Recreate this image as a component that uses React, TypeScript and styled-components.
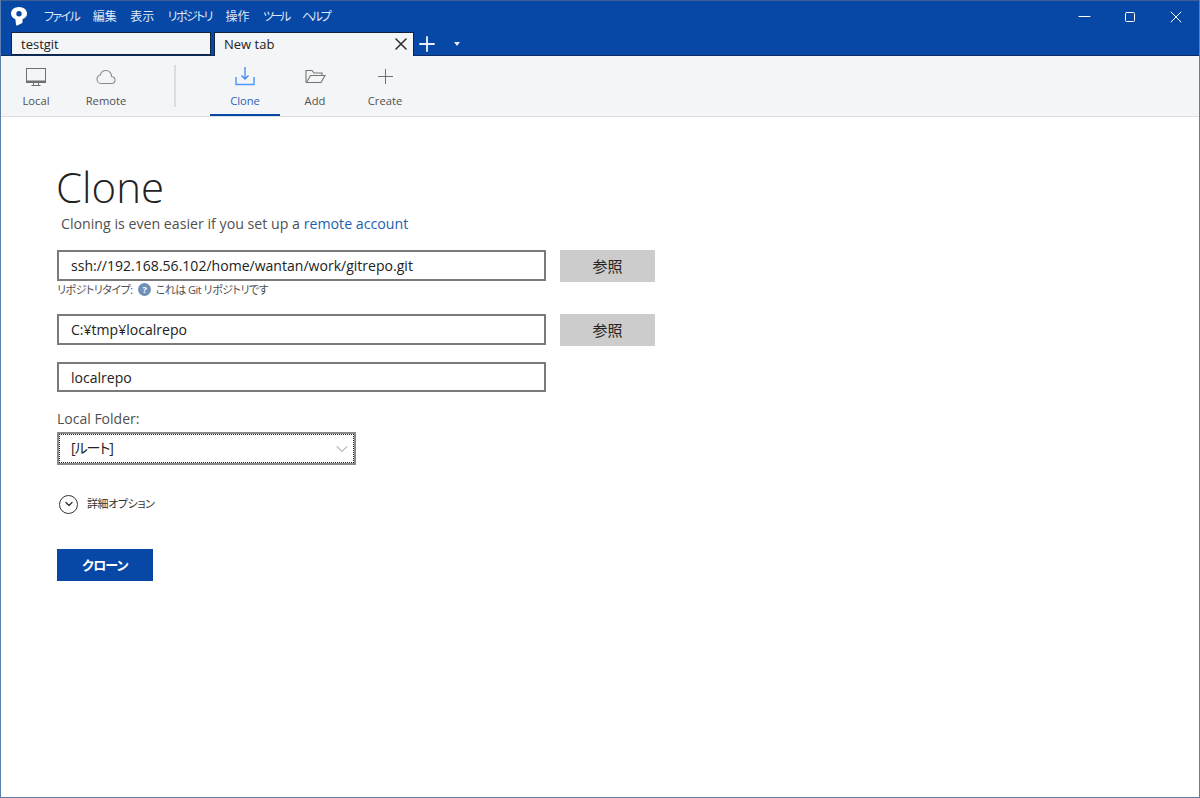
import styled, { createGlobalStyle } from "styled-components";
import { ChevronDown, Minus, Plus, Square, X } from "lucide-react";

const font = `"Open Sans", "Noto Sans CJK JP", sans-serif`;

const GlobalStyle = createGlobalStyle`
  html, body { margin: 0; padding: 0; background: #fff; }
  * { box-sizing: border-box; }
`;

const menus = [
  { label: "ファイル", tracking: -1.6 },
  { label: "編集", tracking: 0 },
  { label: "表示", tracking: 0 },
  { label: "リポジトリ", tracking: -1.6 },
  { label: "操作", tracking: 0 },
  { label: "ツール", tracking: -2.9 },
  { label: "ヘルプ", tracking: -2.3 },
];

const Logo = () => (
  <svg width="16" height="19" viewBox="0 0 16 19">
    <path
      fill="#fff"
      fillRule="evenodd"
      d="M8 0C3.500 0 0 2.800 0 6.500c0 2.800 1.800 4.800 4.400 5.700L5 17.800c.1.700.5 1 1.200.7l4.600-2.200c.5-.3.700-.6.700-1.100v-3C14.300 11.200 16 9.200 16 6.500 16 2.800 12.500 0 8 0zM8 4a2.700 2.700 0 1 1 0 5.400A2.700 2.700 0 0 1 8 4z"
    />
  </svg>
);

const MonitorIcon = () => (
  <svg width="22" height="20" viewBox="0 0 22 20" fill="none" stroke="#6f6f6f">
    <rect x="1.500" y="1.500" width="19" height="14" strokeWidth="1" />
    <path d="M1 14.500h20" strokeWidth="2" />
    <path d="M8.500 16v2M13.500 16v2M6.500 18.500h9" strokeWidth="1" />
  </svg>
);

const CloudIcon = () => (
  <svg width="20" height="16" viewBox="0 0 20 16" fill="none" stroke="#8a8a8a" strokeWidth="1.100">
    <path d="M5 14.500h10.500c2 0 3.500-1.400 3.500-3.400 0-1.900-1.400-3.300-3.300-3.400C15.300 4 13 1.500 9.800 1.500 7 1.500 5 3.400 4.300 6 2.400 6.500 1 8 1 10.200c0 2.400 1.700 4.300 4 4.300z" />
  </svg>
);

const CloneIcon = () => (
  <svg width="20" height="19" viewBox="0 0 20 19" fill="none" stroke="#4c9aff" strokeWidth="1.200">
    <path d="M1 10v7.500h18V10" strokeWidth="1.500" />
    <path d="M10 0v11.500M6.500 8.500l3.500 3.500 3.500-3.500" stroke="#3d8bf0" strokeWidth="1.300" />
  </svg>
);

const FolderIcon = () => (
  <svg width="21" height="15" viewBox="0 0 21 15" fill="none" stroke="#757575" strokeWidth="1.100">
    <path d="M1 13.500V1.500h6l2 2.500h8v2.500" />
    <path d="M1 13.500h15l4-7H5.500L1.500 13.500z" />
  </svg>
);

const PlusIcon = () => (
  <svg width="15" height="15" viewBox="0 0 15 15" stroke="#707070" strokeWidth="1">
    <path d="M7.500 0v15M0 7.500h15" />
  </svg>
);

const HelpBadge = () => (
  <svg width="13" height="13" viewBox="0 0 14 14">
    <circle cx="7" cy="7" r="7" fill="#6f8fb8" />
    <text x="7" y="10.500" fontSize="10" fontWeight="700" fontFamily="Open Sans" fill="#fff" textAnchor="middle">
      ?
    </text>
  </svg>
);

export default function App() {
  return (
    <Window>
      <GlobalStyle />
      <TitleBar>
        <TitleRow>
          <LogoSlot>
            <Logo />
          </LogoSlot>
          <Menu>
            {menus.map((m) => (
              <MenuItem key={m.label} $tracking={m.tracking}>
                {m.label}
              </MenuItem>
            ))}
          </Menu>
          <WindowButtons>
            <WindowButton>
              <Minus size={19} strokeWidth={1.3} />
            </WindowButton>
            <WindowButton>
              <Square size={12} strokeWidth={2} />
            </WindowButton>
            <WindowButton>
              <X size={20} strokeWidth={1.2} />
            </WindowButton>
          </WindowButtons>
        </TitleRow>
        <TabRow>
          <Tab>testgit</Tab>
          <Tab $active>
            New tab
            <TabClose>
              <X size={20} strokeWidth={1.9} />
            </TabClose>
          </Tab>
          <AddTab>
            <Plus size={24} strokeWidth={1.900} />
          </AddTab>
          <TabMenu />
        </TabRow>
      </TitleBar>
      <Toolbar>
        <ToolItem>
          <ToolIcon>
            <MonitorIcon />
          </ToolIcon>
          Local
        </ToolItem>
        <ToolItem>
          <ToolIcon>
            <CloudIcon />
          </ToolIcon>
          Remote
        </ToolItem>
        <ToolDivider />
        <ToolItem $active>
          <ToolIcon>
            <CloneIcon />
          </ToolIcon>
          Clone
        </ToolItem>
        <ToolItem>
          <ToolIcon>
            <FolderIcon />
          </ToolIcon>
          Add
        </ToolItem>
        <ToolItem>
          <ToolIcon>
            <PlusIcon />
          </ToolIcon>
          Create
        </ToolItem>
      </Toolbar>
      <Content>
        <Heading>Clone</Heading>
        <Subtitle>
          Cloning is even easier if you set up a <AccountLink>remote account</AccountLink>
        </Subtitle>
        <FieldRow>
          <TextField>ssh://192.168.56.102/home/wantan/work/gitrepo.git</TextField>
          <BrowseButton>参照</BrowseButton>
        </FieldRow>
        <RepoHint>
          リポジトリタイプ:
          <HelpBadge />
          これは Git リポジトリです
        </RepoHint>
        <FieldRow>
          <TextField>C:¥tmp¥localrepo</TextField>
          <BrowseButton>参照</BrowseButton>
        </FieldRow>
        <NameField>localrepo</NameField>
        <FolderLabel>Local Folder:</FolderLabel>
        <FolderSelect>
          <FolderValue>[ルート]</FolderValue>
          <ChevronDown size={20} strokeWidth={1} color="#777" />
        </FolderSelect>
        <Advanced>
          <AdvancedIcon>
            <ChevronDown size={12} strokeWidth={2.600} color="#333" />
          </AdvancedIcon>
          詳細オプション
        </Advanced>
        <CloneButton>クローン</CloneButton>
      </Content>
    </Window>
  );
}

const Window = styled.div`
  width: 1200px;
  height: 798px;
  overflow: hidden;
  display: flex;
  flex-direction: column;
  border: 1px solid #5a7fb0;
  border-top: 0;
  background: #fff;
  font-family: ${font};
`;

const TitleBar = styled.div`
  height: 56px;
  margin: 0 -1px;
  flex: none;
  background: #0747a6;
  border-top: 1px solid #3f5f8f;
  display: flex;
  flex-direction: column;
`;

const TitleRow = styled.div`
  height: 31px;
  display: flex;
  align-items: center;
`;

const LogoSlot = styled.div`
  width: 44px;
  padding-left: 11px;
  display: flex;
  align-items: center;
`;

const Menu = styled.div`
  display: flex;
  gap: 13.500px;
  font-feature-settings: "palt";
`;

const MenuItem = styled.span<{ $tracking: number }>`
  color: #dfe8f5;
  font-size: 12px;
  line-height: 16px;
  letter-spacing: ${({ $tracking }) => $tracking}px;
`;

const WindowButtons = styled.div`
  margin-left: auto;
  display: flex;
  padding-right: 1px;
`;

const WindowButton = styled.div`
  width: 46px;
  height: 30px;
  color: #fff;
  display: flex;
  align-items: center;
  justify-content: center;
`;

const TabRow = styled.div`
  flex: 1;
  display: flex;
  align-items: flex-end;
  padding-left: 11px;
  gap: 3px;
  border-bottom: 1px solid #0b2d5e;
`;

const Tab = styled.div<{ $active?: boolean }>`
  position: relative;
  width: 200px;
  height: ${({ $active }) => ($active ? "24px" : "23px")};
  margin-bottom: ${({ $active }) => ($active ? "-1px" : "0")};
  padding-left: 9px;
  background: #f4f5f7;
  border: 1px solid #10233f;
  border-bottom: ${({ $active }) => ($active ? "0" : "1px solid #10233f")};
  color: #222;
  font-size: 13px;
  line-height: 23px;
`;

const TabClose = styled.span`
  position: absolute;
  top: 1px;
  right: 2px;
  display: flex;
  color: #333;
`;

const AddTab = styled.div`
  width: 26px;
  height: 23px;
  margin-left: -3px;
  color: #e8eef8;
  display: flex;
  align-items: center;
  justify-content: center;
`;

const TabMenu = styled.div`
  width: 0;
  height: 0;
  margin: 0 0 9px 11px;
  border-left: 3.500px solid transparent;
  border-right: 3.500px solid transparent;
  border-top: 4px solid #e8eef8;
`;

const Toolbar = styled.div`
  height: 61px;
  flex: none;
  display: flex;
  background: #f4f5f7;
  border-bottom: 1px solid #dcdde0;
`;

const ToolItem = styled.div<{ $active?: boolean }>`
  width: 70px;
  display: flex;
  flex-direction: column;
  align-items: center;
  padding-bottom: 6px;
  color: ${({ $active }) => ($active ? "#2f62b5" : "#505050")};
  font-size: 11.200px;
  line-height: 15px;
  border-bottom: 2px solid ${({ $active }) => ($active ? "#0747a6" : "transparent")};
`;

const ToolIcon = styled.div`
  height: 38px;
  padding-top: 4px;
  display: flex;
  align-items: center;
  justify-content: center;
`;

const ToolDivider = styled.div`
  width: 2px;
  height: 42px;
  margin: 9px 34px 0 33px;
  background: #dcdde0;
`;

const Content = styled.div`
  flex: 1;
  padding: 43px 0 0 56px;
  display: flex;
  flex-direction: column;
  align-items: flex-start;
`;

const Heading = styled.h1`
  margin: 0 0 0 -1px;
  font-family: "Open Sans", sans-serif;
  font-weight: 300;
  font-size: 42px;
  line-height: 54px;
  color: #222;
`;

const Subtitle = styled.div`
  margin: 0 0 16px 4px;
  font-size: 14.200px;
  line-height: 20px;
  color: #505050;
`;

const AccountLink = styled.span`
  color: #1d5fb0;
`;

const FieldRow = styled.div`
  display: flex;
  gap: 14px;
`;

const TextField = styled.div`
  width: 489px;
  height: 31px;
  padding-left: 12px;
  border: 2px solid #7a7a7a;
  background: #fff;
  color: #222;
  font-size: 14.050px;
  line-height: 27px;
`;

const NameField = styled(TextField)`
  height: 30px;
  margin-top: 16px;
  line-height: 27px;
`;

const BrowseButton = styled.div`
  width: 95px;
  height: 32px;
  background: #cccccc;
  color: #222;
  font-size: 15px;
  line-height: 32px;
  text-align: center;
`;

const RepoHint = styled.div`
  height: 32px;
  display: flex;
  align-items: flex-start;
  gap: 5px;
  font-size: 11px;
  line-height: 16px;
  letter-spacing: -0.500px;
  color: #505050;
  font-feature-settings: "palt";
  svg {
    margin-top: 1px;
  }
`;

const FolderLabel = styled.div`
  margin-top: 17px;
  font-size: 14px;
  line-height: 20px;
  color: #505050;
`;

const FolderSelect = styled.div`
  width: 299px;
  height: 33px;
  margin-top: 3px;
  padding: 0 2px 0 12px;
  display: flex;
  align-items: center;
  justify-content: space-between;
  border: 2px solid #8a8a8a;
  outline: 1px dotted #222;
  outline-offset: -3px;
  background: #fff;
`;

const FolderValue = styled.span`
  font-size: 14px;
  line-height: 18px;
  margin-top: -2px;
  letter-spacing: -1px;
  color: #222;
  font-feature-settings: "palt";
`;

const Advanced = styled.div`
  margin-top: 29px;
  display: flex;
  align-items: center;
  gap: 9px;
  padding-left: 2px;
  font-size: 11px;
  line-height: 20px;
  letter-spacing: -0.400px;
  color: #333;
  font-feature-settings: "palt";
`;

const AdvancedIcon = styled.span`
  width: 19px;
  height: 19px;
  border: 1px solid #333;
  border-radius: 50%;
  display: flex;
  align-items: center;
  justify-content: center;
`;

const CloneButton = styled.div`
  width: 96px;
  height: 32px;
  margin-top: 35px;
  background: #0747a6;
  color: #fff;
  font-size: 13px;
  font-weight: 700;
  line-height: 32px;
  letter-spacing: -0.800px;
  text-align: center;
  font-feature-settings: "palt";
`;
